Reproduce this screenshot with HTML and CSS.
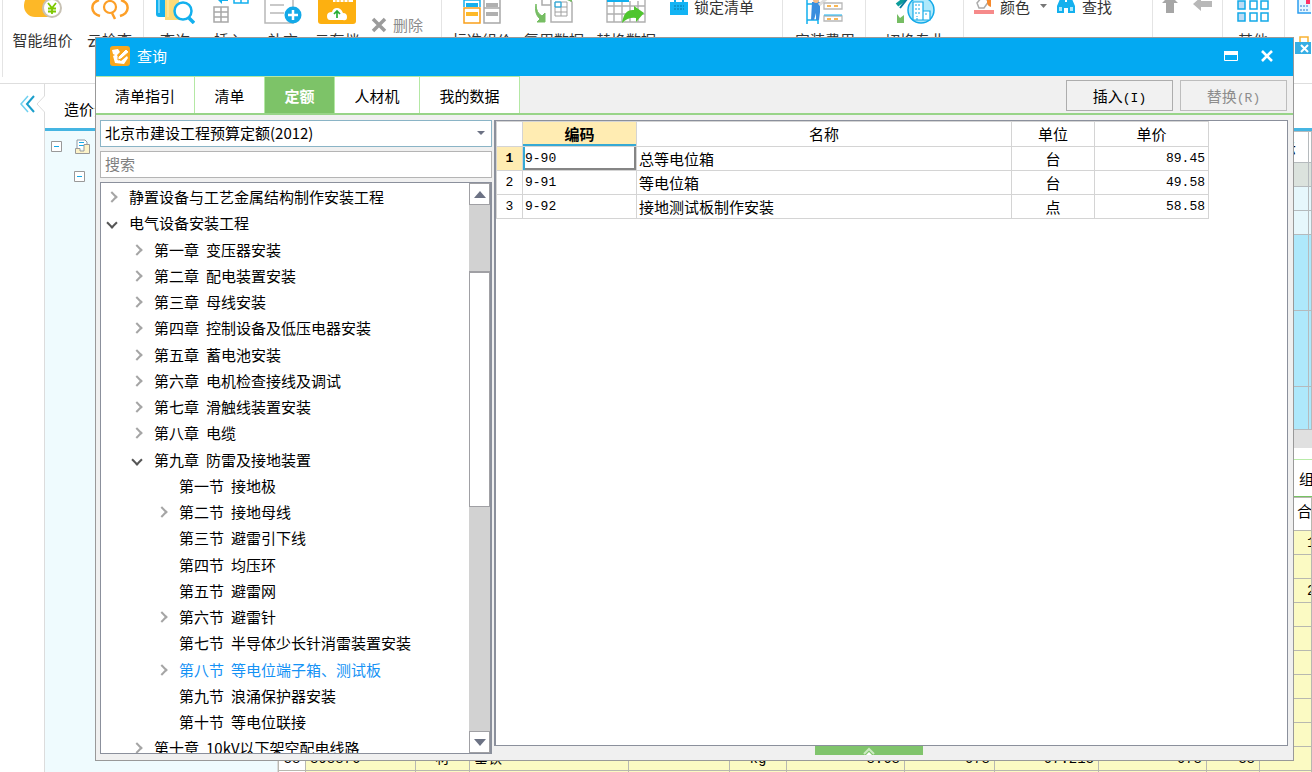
FILE: index.html
```html
<!DOCTYPE html>
<html lang="zh-CN">
<head>
<meta charset="utf-8">
<title>查询</title>
<link rel="stylesheet" href="styles.css">
</head>
<body>
<div class="app">
  <header class="ribbon">
    <div class="group g-cloud">
      <button class="tool"><svg width="40" height="24" viewBox="0 0 40 24"><rect x="1" y="-6" width="34" height="23" rx="11" fill="#fdb827"/><circle cx="29" cy="8" r="9" fill="#fff" stroke="#c8c2b4" stroke-width="2"/><path d="M25 3l4 5 4-5M29 8v6M25 8.500h8M25 11.500h8" fill="none" stroke="#7dc800" stroke-width="1.800"/></svg><span>智能组价</span></button>
      <button class="tool"><svg width="40" height="24" viewBox="0 0 40 24"><path d="M9 0C0 3 0 13 10 16M31 0c9 3 9 13-1 16" fill="none" stroke="#fd9f27" stroke-width="2.500"/><circle cx="20" cy="7" r="6" fill="none" stroke="#fd9f27" stroke-width="2.200"/><path d="M22 13l3 6" stroke="#fd9f27" stroke-width="2.500"/></svg><span>云检查</span></button>
    </div>
    <div class="group g-edit">
      <button class="tool"><svg width="40" height="24" viewBox="0 0 40 24"><path d="M1 0h9v17H4q-3 0-3-3z" fill="#13b0ee"/><path d="M4 0v13" stroke="#8fe0fb" stroke-width="1.500"/><path d="M10 0h14v20H10z" fill="#fddb78"/><path d="M13 0v17" stroke="#fff0b8"/><circle cx="28" cy="11" r="8.500" fill="#fff" stroke="#13b0ee" stroke-width="2.500"/><path d="M34 18l5 5" stroke="#13b0ee" stroke-width="3.500"/></svg><span>查询</span></button>
      <button class="tool"><svg width="40" height="24" viewBox="0 0 40 24"><path d="M5 7h14v15H5zM5 12h14M5 17h14M12 7v15" fill="none" stroke="#a8a8a8" stroke-width="1.500"/><path d="M9 0l4 4V1h6V-1H9z" fill="#13b0ee"/><path d="M25-5h14v8H25zM32-5v8" fill="none" stroke="#13b0ee" stroke-width="1.500"/></svg><span>插入</span></button>
      <button class="tool"><svg width="40" height="24" viewBox="0 0 40 24"><path d="M2-2h28v25H2zM7 5h14M7 13h14" fill="none" stroke="#b8b8b8" stroke-width="1.500"/><circle cx="30" cy="15" r="8.500" fill="#13a9e8"/><path d="M30 10v10M25 15h10" stroke="#fff" stroke-width="2.500"/></svg><span>补充</span></button>
      <button class="tool"><svg width="40" height="24" viewBox="0 0 40 24"><rect x="1" y="-4" width="38" height="28" rx="3" fill="#fdb010"/><path d="M16 0h20v2H16z" fill="#fff"/><path d="M19 0v2M23 0v2M27 0v2M31 0v2" stroke="#fdb010"/><path d="M13 20q-3 0-3-4t5-4q1-4 5-4t6 5q4 0 4 4t-4 3z" fill="#fff"/><path d="M20 18v-7M17 14l3-3 3 3" fill="none" stroke="#27ae35" stroke-width="1.700"/></svg><span>云存档</span></button>
      <button class="mini muted low"><svg width="16" height="16" viewBox="0 0 16 16"><path d="M2 2l12 12M14 2L2 14" stroke="#9b9b9b" stroke-width="3.500"/></svg>删除</button>
    </div>
    <div class="group g-data">
      <button class="tool"><svg width="40" height="24" viewBox="0 0 40 24"><path d="M2 7V0h16v7" fill="none" stroke="#13b0ee" stroke-width="1.500"/><path d="M4 3h12v4H4z" fill="#13b0ee"/><path d="M2 8h16v15H2z" fill="#fff" stroke="#f9a01b" stroke-width="1.500"/><path d="M4 12h12v4H4z" fill="#fdb827"/><path d="M22-1h16v24H22zM22 8h16" fill="none" stroke="#a8a8a8" stroke-width="1.500"/><path d="M24 3h12v4H24zM24 12h12v4H24z" fill="#b0b0b0"/></svg><span>标准组价</span></button>
      <button class="tool"><svg width="40" height="24" viewBox="0 0 40 24"><path d="M8-2h9v7H8z" fill="none" stroke="#aaa" stroke-width="1.500"/><path d="M17-2h16l5 4v20H17z" fill="#fff" stroke="#b0b0b0" stroke-width="1.500"/><path d="M21 2h12v14H21zM21 7h12M21 12h12M27 2v14" fill="none" stroke="#a0a0a0"/><path d="M21 2h6v5h-6z" fill="none" stroke="#13b0ee"/><path d="M2 4Q2 13 8 16l3-3v9H3l3-3Q0 14 2 4z" fill="#76bd63" stroke="#76bd63"/><path d="M33 0l5-1v3z" fill="#76bd63"/></svg><span>复用数据</span></button>
      <button class="tool"><svg width="40" height="24" viewBox="0 0 40 24"><path d="M1-2h38v24H1zM1 6h38M1 14h38M8 1v21M16 1v21M24 1v21M32 1v21" fill="#fff" stroke="#b0b0b0" stroke-width="1.400"/><path d="M1 1h22" stroke="#13b0ee" stroke-width="2"/><path d="M16 23Q18 9 28 10V6l10 7-8 9v-4q-8-1-14 5z" fill="#4fc52e"/></svg><span>替换数据</span></button>
      <button class="mini top"><svg width="18" height="18" viewBox="0 0 18 18"><path d="M5 5V1h8v4" fill="none" stroke="#13a9e8" stroke-width="2"/><path d="M0 4h18v13H0z" fill="#13b4f4"/><path d="M4 8h10M4 11h10" stroke="#0876a5" stroke-dasharray="2 1"/></svg>锁定清单</button>
    </div>
    <div class="group g-fee">
      <button class="tool"><svg width="40" height="24" viewBox="0 0 40 24"><path d="M2 0v24M13 0v24M2 4h11M2 20h11" stroke="#13b0ee" stroke-width="1.500" fill="none"/><path d="M7 2h8v10l-1 8h-3v-7l-2 7H6z" fill="#3b8ede"/><circle cx="11" cy="0" r="3" fill="#f8bd88"/><path d="M14 5l7-6" stroke="#ddd" stroke-width="3"/><path d="M19 3h18v6H19zM19 16h18v5H19z" fill="#fff" stroke="#b8b8b8" stroke-width="1.300"/><path d="M19 15h18" stroke="#13b0ee"/><path d="M22 6h4M29 6h4M22 19h4M29 19h4" stroke="#f9a01b" stroke-width="1.500"/></svg><span>安装费用</span></button>
    </div>
    <div class="group g-major">
      <button class="tool"><svg width="40" height="24" viewBox="0 0 40 24"><path d="M2 14l3 4 4-3v8H2z" fill="#76bd63"/><path d="M2 5l9-7" stroke="#0b9c9a" stroke-width="4"/><path d="M5 8l7-9" stroke="#087da0" stroke-width="2"/><circle cx="26" cy="10" r="13" fill="#aee9fb" stroke="#13a9e8" stroke-width="1.500"/><path d="M18 2h10v18H18zM28 11h7v9h-7" fill="#fff" stroke="#13a9e8" stroke-width="1.200"/><path d="M20 5h6M20 9h6M20 13h6M30 14h3M22 20v-4" stroke="#13a9e8" stroke-dasharray="2 1"/></svg><span>切换专业</span></button>
    </div>
    <div class="group g-find">
      <button class="mini top"><svg width="20" height="16" viewBox="0 0 20 16"><path d="M3 4l5-6 7 4-5 7H5z" fill="#fff" stroke="#aaa" stroke-width="1.500"/><path d="M13-1h4v9q-4-1-4-5z" fill="#f6892c"/><path d="M0 11h20v4H0z" fill="#f68a8a"/></svg>颜色<svg class="caret" width="7" height="5" viewBox="0 0 7 5"><path d="M0 0h7L3.500 4z" fill="#777"/></svg></button>
      <button class="mini top"><svg width="20" height="16" viewBox="0 0 20 16"><path d="M4 0h5v3h2V0h5l3 7v7h-7V9H8v5H1V7z" fill="#13b0ee"/><path d="M3 8h3v4H3zM14 8h3v4h-3z" fill="#a9e8fc"/></svg>查找</button>
    </div>
    <div class="group g-move">
      <button class="mini top"><svg width="18" height="16" viewBox="0 0 18 16"><path d="M9-4l8 8h-4v10H5V4H1z" fill="#a6a6a6"/></svg></button>
      <button class="mini top"><svg width="20" height="16" viewBox="0 0 20 16"><path d="M0 5l8-7v4h11v6H8v4z" fill="#b8b8b8"/></svg></button>
    </div>
    <div class="group g-other">
      <button class="tool"><svg width="32" height="24" viewBox="0 0 32 24"><g fill="#fff" stroke="#13a9e8" stroke-width="1.500"><path d="M1 1h7v8H1zM1 13h7v8H1z" fill="#bcdcf5"/><path d="M13 1h7v8h-7zM24 1h7v8h-7zM13 13h7v8h-7zM24 13h7v8h-7z"/></g></svg><span>其他</span></button>
    </div>
    <div class="group g-last">
      <svg width="18" height="56" viewBox="0 0 18 56"><path d="M5-2h18v15H5z" fill="#e5f7ff" stroke="#2b9df0" stroke-width="1.500"/><path d="M7 6h9M7 10h9" stroke="#2b7bd0" stroke-dasharray="2 1"/><path d="M13 0h4v4h-4z" fill="#f36"/><path d="M7 37h8v8H7z" fill="#fff" stroke="#f9b233" stroke-width="1.500"/><path d="M2 42h20v12H2z" fill="#36aee4"/><path d="M8 45l7 7M15 45l-7 7" stroke="#fff" stroke-width="2"/></svg>
    </div>
  </header>

  <div class="workspace">
    <aside class="rail">
      <svg class="collapse" width="16" height="18" viewBox="0 0 16 18"><path d="M8 1L1 9l7 8" fill="none" stroke="#6fd0f0" stroke-width="1.500"/><path d="M14 1L7 9l7 8" fill="none" stroke="#1a9ecb" stroke-width="2"/></svg>
      <svg class="notch" width="9" height="40" viewBox="0 0 9 40"><path d="M8.500 0v12L1 20l7.500 8v12" fill="none" stroke="#dcdcdc"/></svg>
    </aside>
    <section class="project">
      <div class="project-tab">造价分析</div>
      <div class="project-row"><svg width="11" height="11" viewBox="0 0 11 11"><path d="M.500.500h10v10H.500z" fill="#fff" stroke="#999"/><path d="M3 5.500h5" stroke="#13a9e8"/></svg><svg width="15" height="15" viewBox="0 0 15 15"><path d="M2 10V1h8l2 2v6" fill="#fff" stroke="#8c9aa4"/><path d="M4 3.500h5M4 6.500h5" stroke="#13a9e8"/><path d="M.500 9.500H5V12h4V5.500h5.500v9H.500z" fill="#fdf3c8" stroke="#999"/></svg></div>
      <div class="project-row child"><svg width="11" height="11" viewBox="0 0 11 11"><path d="M.500.500h10v10H.500z" fill="#fff" stroke="#999"/><path d="M3 5.500h5" stroke="#13a9e8"/></svg></div>
    </section>
    <main class="detail">
      <div class="detail-bar"></div>
      <table class="items">
        <colgroup><col><col class="c-edge"></colgroup>
        <tr class="i-head"><td>显示</td><td></td></tr>
        <tr class="i-sum"><td></td><td></td></tr>
        <tr class="i-part"><td></td><td></td></tr>
        <tr class="i-part"><td></td><td></td></tr>
        <tr class="i-item"><td></td><td></td></tr>
        <tr class="i-item"><td></td><td></td></tr>
        <tr class="i-item last"><td></td><td></td></tr>
      </table>
      <div class="scroll-strip"></div>
      <div class="sub-tabs">组价</div>
      <table class="costs">
        <colgroup><col class="w27"><col class="w110"><col class="w54"><col class="w159"><col class="w101"><col class="w57"><col class="w118"><col class="w90"><col class="w104"><col class="w108"><col class="w53"><col></colgroup>
        <tr class="c-head"><td></td><td></td><td></td><td></td><td></td><td></td><td></td><td></td><td></td><td></td><td></td><td class="total">合价</td></tr>
        <tr><td></td><td></td><td></td><td></td><td></td><td></td><td></td><td></td><td></td><td></td><td></td><td class="far">1</td></tr>
        <tr><td></td><td></td><td></td><td></td><td></td><td></td><td></td><td></td><td></td><td></td><td></td><td></td></tr>
        <tr><td></td><td></td><td></td><td></td><td></td><td></td><td></td><td></td><td></td><td></td><td></td><td class="far">2</td></tr>
        <tr><td></td><td></td><td></td><td></td><td></td><td></td><td></td><td></td><td></td><td></td><td></td><td></td></tr>
        <tr><td></td><td></td><td></td><td></td><td></td><td></td><td></td><td></td><td></td><td></td><td></td><td></td></tr>
        <tr><td></td><td></td><td></td><td></td><td></td><td></td><td></td><td></td><td></td><td></td><td></td><td></td></tr>
        <tr><td></td><td></td><td></td><td></td><td></td><td></td><td></td><td></td><td></td><td></td><td></td><td></td></tr>
        <tr><td></td><td></td><td></td><td></td><td></td><td></td><td></td><td></td><td></td><td></td><td></td><td></td></tr>
        <tr><td></td><td></td><td></td><td></td><td></td><td></td><td></td><td></td><td></td><td></td><td></td><td></td></tr>
        <tr><td class="mid">38</td><td>898876</td><td class="mid">材</td><td>垂铁</td><td></td><td class="mid">kg</td><td class="num">8.68</td><td class="num">678</td><td class="num">67.213</td><td class="num">678</td><td class="num">38</td><td></td></tr>
        <tr><td></td><td></td><td></td><td></td><td></td><td></td><td></td><td></td><td></td><td></td><td></td><td></td></tr>
      </table>
    </main>
  </div>

  <div class="dialog" role="dialog" aria-labelledby="dialog-title">
    <div class="titlebar">
      <svg width="20" height="20" viewBox="0 0 20 20"><rect width="20" height="20" rx="3" fill="#f9a61c"/><path d="M8 3L2 4l1 4 2 1-2 1 2 7 9 1 4-6-1-2-6 5-2-1-2-5 3-3z" fill="#fff"/><path d="M8 11l8-8 3 3-8 7-3 1z" fill="#fff" stroke="#f9a61c"/></svg>
      <h1 id="dialog-title">查询</h1>
      <button class="win" aria-label="最大化"><svg width="14" height="10" viewBox="0 0 14 10"><path d="M.500.500h13v9H.500z" fill="none" stroke="#fff"/><path d="M0 0h14v4H0z" fill="#fff"/></svg></button>
      <button class="win" aria-label="关闭"><svg width="14" height="12" viewBox="0 0 14 12"><path d="M2 1l10 10M12 1L2 11" stroke="#fff" stroke-width="2.600"/></svg></button>
    </div>
    <nav class="tabs">
      <button class="tab t-guide">清单指引</button>
      <button class="tab t-list">清单</button>
      <button class="tab t-quota active">定额</button>
      <button class="tab t-labor">人材机</button>
      <button class="tab t-mine">我的数据</button>
      <div class="actions">
        <button class="action">插入<span>(I)</span></button>
        <button class="action" disabled>替换<span>(R)</span></button>
      </div>
    </nav>
    <div class="body">
      <div class="side">
        <div class="combo">
          <select aria-label="定额库"><option>北京市建设工程预算定额(2012)</option></select>
          <svg width="8" height="5" viewBox="0 0 8 5"><path d="M0 0h8L4 4z" fill="#6c7284"/></svg>
        </div>
        <input class="search" type="text" placeholder="搜索" aria-label="搜索">
        <div class="tree">
          <ul class="nodes">
            <li class="l1 closed">静置设备与工艺金属结构制作安装工程</li>
            <li class="l1 open">电气设备安装工程</li>
            <li class="l2 closed"><span>第一章</span><span>变压器安装</span></li>
            <li class="l2 closed"><span>第二章</span><span>配电装置安装</span></li>
            <li class="l2 closed"><span>第三章</span><span>母线安装</span></li>
            <li class="l2 closed"><span>第四章</span><span>控制设备及低压电器安装</span></li>
            <li class="l2 closed"><span>第五章</span><span>蓄电池安装</span></li>
            <li class="l2 closed"><span>第六章</span><span>电机检查接线及调试</span></li>
            <li class="l2 closed"><span>第七章</span><span>滑触线装置安装</span></li>
            <li class="l2 closed"><span>第八章</span><span>电缆</span></li>
            <li class="l2 open"><span>第九章</span><span>防雷及接地装置</span></li>
            <li class="l3"><span>第一节</span><span>接地极</span></li>
            <li class="l3 closed"><span>第二节</span><span>接地母线</span></li>
            <li class="l3"><span>第三节</span><span>避雷引下线</span></li>
            <li class="l3"><span>第四节</span><span>均压环</span></li>
            <li class="l3"><span>第五节</span><span>避雷网</span></li>
            <li class="l3 closed"><span>第六节</span><span>避雷针</span></li>
            <li class="l3"><span>第七节</span><span>半导体少长针消雷装置安装</span></li>
            <li class="l3 closed selected"><span>第八节</span><span>等电位端子箱、测试板</span></li>
            <li class="l3"><span>第九节</span><span>浪涌保护器安装</span></li>
            <li class="l3"><span>第十节</span><span>等电位联接</span></li>
            <li class="l2 closed"><span>第十章</span><span>10kV以下架空配电线路</span></li>
          </ul>
          <div class="scrollbar">
            <button aria-label="向上"><svg width="12" height="7" viewBox="0 0 12 7"><path d="M6 0l6 7H0z" fill="#6c7284"/></svg></button>
            <div class="track-above"></div>
            <div class="thumb"></div>
            <div class="track-below"></div>
            <button aria-label="向下"><svg width="12" height="7" viewBox="0 0 12 7"><path d="M0 0h12L6 7z" fill="#6c7284"/></svg></button>
          </div>
        </div>
      </div>
      <div class="content">
        <div class="results">
          <table class="grid">
            <colgroup><col class="g-no"><col class="g-code"><col><col class="g-unit"><col class="g-price"></colgroup>
            <thead><tr><th></th><th class="current">编码</th><th>名称</th><th>单位</th><th>单价</th></tr></thead>
            <tbody>
              <tr><th class="current">1</th><td class="code focus">9-90</td><td class="name">总等电位箱</td><td class="unit">台</td><td class="price">89.45</td></tr>
              <tr><th>2</th><td class="code">9-91</td><td class="name">等电位箱</td><td class="unit">台</td><td class="price">49.58</td></tr>
              <tr><th>3</th><td class="code">9-92</td><td class="name">接地测试板制作安装</td><td class="unit">点</td><td class="price">58.58</td></tr>
            </tbody>
          </table>
        </div>
        <div class="expander"><button aria-label="展开"><svg width="12" height="8" viewBox="0 0 12 8"><path d="M1 7l5-5 5 5" fill="none" stroke="#cdebc3" stroke-width="2"/><path d="M6 5l3 3H3z" fill="#fff"/></svg></button></div>
      </div>
    </div>
  </div>
</div>
</body>
</html>
```
FILE: styles.css
```css
* { box-sizing: border-box; }
body {
  margin: 0;
  font-family: "Noto Sans CJK SC", sans-serif;
  font-size: 15px;
  color: #000;
  background: #fff;
}
button, input, select { font: inherit; color: inherit; margin: 0; }
button { border: 0; padding: 0; background: none; }
svg { display: block; flex: none; }
table { border-collapse: collapse; table-layout: fixed; width: 100%; }

.app {
  position: relative;
  height: 100vh;
  overflow: hidden;
  display: flex;
  flex-direction: column;
}

/* Ribbon */
.ribbon {
  flex: none;
  height: 84px;
  padding-left: 2px;
  display: flex;
  align-items: flex-start;
  border-bottom: 1px solid #dedede;
  overflow: hidden;
  color: #333;
}
.group {
  flex: none;
  height: 77px;
  display: flex;
  align-items: flex-start;
  border-left: 1px solid #e4e4e4;
}
.g-cloud { width: 141px; padding-left: 6px; }
.g-edit { width: 298px; padding-left: 4px; }
.g-data { width: 341px; padding-left: 4px; }
.g-fee { width: 83px; padding-left: 8px; }
.g-major { width: 98px; padding-left: 15px; }
.g-find { width: 189px; padding-left: 10px; gap: 9px; }
.g-move { width: 70px; padding-left: 8px; gap: 14px; }
.g-other { width: 62px; }
.g-last { flex: 1; padding-left: 8px; }
.tool {
  width: 68px;
  display: flex;
  flex-direction: column;
  align-items: center;
  gap: 5px;
  line-height: 22px;
  white-space: nowrap;
}
.g-edit .tool { width: 54px; }
.g-data .tool { width: 72px; }
.g-other .tool { width: 60px; }
.mini {
  display: flex;
  align-items: center;
  gap: 6px;
  line-height: 22px;
  white-space: nowrap;
}
.mini.low { padding: 14px 0 0 7px; }
.mini.top { height: 18px; padding-bottom: 5px; }
.g-data .mini { padding-left: 8px; }
.mini.muted { color: #8c8c8c; }
.caret { margin-left: 4px; }

/* Workspace behind the dialog */
.workspace { flex: 1; min-height: 0; display: flex; }
.rail {
  width: 45px;
  flex: none;
  display: flex;
  justify-content: space-between;
  padding-left: 20px;
  background: linear-gradient(#dcdcdc, #dcdcdc) right 40px / 1px 100% no-repeat;
}
.collapse { margin-top: 11px; }
.project {
  width: 233px;
  flex: none;
  background: #effbfe;
  border-right: 1px solid #dcdcdc;
}
.project-tab {
  height: 47px;
  padding-left: 19px;
  line-height: 50px;
  background: #fff;
  border-bottom: 3px solid #45b5e2;
}
.project-row {
  display: flex;
  align-items: center;
  gap: 13px;
  height: 30px;
  padding-left: 6px;
}
.project-row.child { padding-left: 29px; }
.detail { flex: 1; min-width: 0; overflow: hidden; }
.detail-bar { height: 47px; border-bottom: 3px solid #45b5e2; }
.items td { border: 1px solid #b5babd; text-align: right; padding: 0 12px 0 0; }
.c-edge { width: 3px; }
.items td:last-child { padding: 0; }
.i-head { height: 31px; }
.i-sum { height: 24px; background: #dbe2dd; }
.i-part { height: 24px; background: #e6f7fc; }
.i-item { height: 76px; background: #aee8fb; }
.i-item.last { height: 43px; }
.scroll-strip { height: 18px; background: #e0e0e0; }
.sub-tabs {
  margin-top: 11px;
  height: 38px;
  line-height: 38px;
  padding-left: 1021px;
  border-top: 1px solid #b8eba8;
  border-bottom: 1px solid #76c363;
  white-space: nowrap;
}
.costs { background: #fbfac3; font-size: 14px; font-family: "Liberation Mono", "Noto Sans CJK SC", monospace; }
.costs tr { height: 24px; }
.costs .c-head { height: 33px; background: #fff; }
.costs td {
  border: 1px solid #b8b8b0;
  padding: 0 4px;
  line-height: 16px;
  white-space: nowrap;
  overflow: hidden;
}
.costs td:first-child { background: #fff; }
.costs .mid { text-align: center; }
.costs .num { text-align: right; }
.costs .far { padding: 0 0 0 47px; }
.costs .total { padding: 0 0 0 37px; font-size: 15px; }
.w27 { width: 27px; }
.w53 { width: 53px; }
.w54 { width: 54px; }
.w57 { width: 57px; }
.w90 { width: 90px; }
.w101 { width: 101px; }
.w104 { width: 104px; }
.w108 { width: 108px; }
.w110 { width: 110px; }
.w118 { width: 118px; }
.w159 { width: 159px; }

/* Dialog */
.dialog {
  position: absolute;
  top: 37px;
  left: 95px;
  right: 18px;
  bottom: 11px;
  display: flex;
  flex-direction: column;
  background: #f0f0f0;
  border: 1px solid #999;
}
.titlebar {
  flex: none;
  height: 38px;
  display: flex;
  align-items: center;
  gap: 7px;
  padding: 0 19px 2px 14px;
  background: #03a9f2;
  color: #fff;
}
.titlebar h1 { flex: 1; margin: 0; font-size: 15px; font-weight: 400; line-height: 22px; }
.win + .win { margin-left: 15px; }
.tabs {
  flex: none;
  height: 39px;
  display: flex;
  border-bottom: 2px solid #98d488;
}
.tab {
  background: #fff;
  border-top: 1px solid #b4e8a4;
  border-right: 1px solid #b4e8a4;
}
.tab.active { background: #7dc368; color: #fff; font-weight: 700; }
.t-guide { width: 99px; }
.t-list { width: 70px; }
.t-quota { width: 70px; }
.t-labor { width: 85px; }
.t-mine { width: 100px; }
.actions { margin-left: auto; padding: 4px 6px 0 0; display: flex; gap: 7px; }
.action {
  width: 107px;
  height: 31px;
  border: 1px solid #adadad;
  background: #f1f1f1;
}
.action span { font: 13px "Liberation Mono", monospace; }
.action:disabled { color: #8d8d8d; border-color: #bdbdbd; }

.body { flex: 1; min-height: 0; display: flex; gap: 2px; padding: 5px 5px 0 4px; }
.side { width: 392px; flex: none; display: flex; flex-direction: column; gap: 4px; padding-bottom: 6px; }
.combo { display: grid; align-items: center; }
.combo > * { grid-area: 1 / 1; }
.combo svg { justify-self: end; margin-right: 7px; pointer-events: none; }
.combo select {
  appearance: none;
  height: 27px;
  width: 100%;
  padding: 0 20px 2px 4px;
  border: 1px solid #8ab4c6;
  border-radius: 0;
  background: #fff;
}
.search {
  flex: none;
  height: 27px;
  padding: 0 4px 2px;
  border: 1px solid #b4b4b4;
  background: #fff;
}
.search::placeholder { color: #808080; opacity: 1; }
.tree {
  flex: 1;
  min-height: 0;
  display: flex;
  border: 1px solid #8b909c;
  border-right-width: 2px;
  background: #fff;
}
.nodes {
  flex: 1;
  min-width: 0;
  margin: 0;
  padding: 1px 0 0;
  list-style: none;
  overflow: hidden;
  line-height: 1.75;
}
.nodes li { display: flex; align-items: center; gap: 7px; white-space: nowrap; }
.nodes li::before {
  content: "";
  box-sizing: border-box;
  width: 8px;
  height: 8px;
  flex: none;
  margin-right: 6px;
}
.nodes .closed::before {
  border: solid #a5a5a5;
  border-width: 2px 2px 0 0;
  transform: rotate(45deg);
}
.nodes .open::before {
  border: solid #555;
  border-width: 0 2px 2px 0;
  transform: rotate(45deg);
}
.l1 { padding-left: 7px; }
.l2 { padding-left: 32px; }
.l3 { padding-left: 57px; }
.nodes .selected { color: #1592f5; }
.scrollbar { width: 21px; flex: none; display: flex; flex-direction: column; background: #d2d2d2; }
.scrollbar button {
  height: 22px;
  flex: none;
  display: grid;
  place-items: center;
  background: #fff;
  border: 1px solid #a0a0a4;
}
.track-above { flex: 66; }
.thumb { flex: 235; background: #fff; border: 1px solid #a0a0a4; border-top-width: 2px; }
.track-below { flex: 226; }

.content { flex: 1; min-width: 0; display: flex; flex-direction: column; }
.results {
  flex: 1;
  min-height: 0;
  background: #fff;
  border: 1px solid #8b909c;
  border-left-width: 2px;
}
.expander { flex: none; height: 14px; padding-right: 44px; display: flex; justify-content: center; }
.expander button { width: 108px; height: 9px; display: grid; place-items: center; background: #80c46c; }
.grid { width: calc(100% - 78px); line-height: 22px; }
.grid tr { height: 24px; }
.grid thead tr { height: 25px; }
.grid th, .grid td { border: 1px solid #d4d4d4; padding: 0 2px; font-weight: 400; }
.grid th.current { background: #ffecb2; font-weight: 700; }
.grid thead .current { box-shadow: inset 0 -2px #36a9d4; }
.grid .focus { box-shadow: inset 2px 0 #36a9d4, inset -2px -2px #858585; }
.grid tbody th, .code, .price { font-family: "Liberation Mono", monospace; font-size: 13px; }
.grid .unit { text-align: center; }
.grid .price { text-align: right; padding-right: 3px; }
.g-no { width: 26px; }
.g-code { width: 114px; }
.g-unit { width: 83px; }
.g-price { width: 114px; }
```
